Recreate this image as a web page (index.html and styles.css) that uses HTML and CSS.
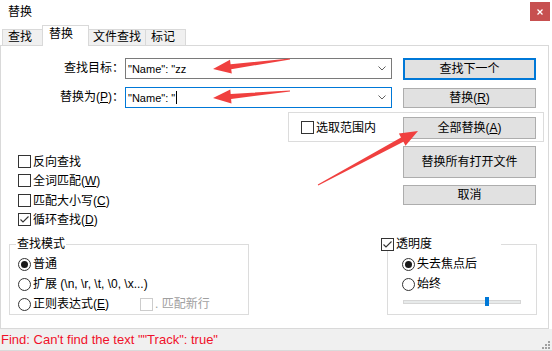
FILE: index.html
```html
<!DOCTYPE html>
<html lang="zh-CN">
<head>
<meta charset="utf-8">
<title>替换</title>
<link rel="stylesheet" href="styles.css">
</head>
<body>
<div class="window">
  <div class="titlebar">
    <span class="title">替换</span>
    <span class="close"><svg width="6" height="6" viewBox="0 0 6 6"><path d="M0.5 0.5L5.5 5.5M5.5 0.5L0.5 5.5" stroke="#fff" stroke-width="1.3"/></svg></span>
  </div>
  <div class="tabs">
    <div class="tab t1">查找</div>
    <div class="tab t2 active">替换</div>
    <div class="tab t3">文件查找</div>
    <div class="tab t4">标记</div>
  </div>
  <div class="panel">
    <div class="row r1">
      <span class="lbl">查找目标：</span>
      <div class="combo"><span class="val">"Name": "zz</span><svg class="chev" width="8" height="5" viewBox="0 0 8 5"><path d="M0.5 0.5L4 4L7.5 0.5" fill="none" stroke="#606060"/></svg></div>
      <button class="btn default b1">查找下一个</button>
    </div>
    <div class="row r2">
      <span class="lbl">替换为(<u>P</u>)：</span>
      <div class="combo focus"><span class="val">"Name": "<i class="caret"></i></span><svg class="chev" width="8" height="5" viewBox="0 0 8 5"><path d="M0.5 0.5L4 4L7.5 0.5" fill="none" stroke="#606060"/></svg></div>
      <button class="btn b2">替换(<u>R</u>)</button>
    </div>
    <div class="selgroup">
      <label class="chk selchk"><span class="box"></span>选取范围内</label>
      <button class="btn b3">全部替换(<u>A</u>)</button>
    </div>
    <div class="mid">
      <div class="options">
        <label class="chk"><span class="box"></span>反向查找</label>
        <label class="chk"><span class="box"></span>全词匹配(<u>W</u>)</label>
        <label class="chk"><span class="box"></span>匹配大小写(<u>C</u>)</label>
        <label class="chk"><span class="box checked"><svg width="11" height="11" viewBox="0 0 11 11"><path d="M1.5 5.5L4 8L9.5 2.5" fill="none" stroke="#333" stroke-width="1.1"/></svg></span>循环查找(<u>D</u>)</label>
      </div>
      <div class="sidebtns">
        <button class="btn b4">替换所有打开文件</button>
        <button class="btn b5">取消</button>
      </div>
    </div>
    <div class="bottom">
      <fieldset class="group mode">
        <legend>查找模式</legend>
        <label class="radio"><span class="dot on"></span>普通</label>
        <label class="radio"><span class="dot"></span>扩展 (\n, \r, \t, \0, \x...)</label>
        <div class="regexrow">
          <label class="radio"><span class="dot"></span>正则表达式(<u>E</u>)</label>
          <label class="chk disabled"><span class="box"></span>. 匹配新行</label>
        </div>
      </fieldset>
      <fieldset class="group trans">
        <legend><label class="chk"><span class="box checked"><svg width="11" height="11" viewBox="0 0 11 11"><path d="M1.5 5.5L4 8L9.5 2.5" fill="none" stroke="#333" stroke-width="1.1"/></svg></span>透明度</label></legend>
        <label class="radio"><span class="dot on"></span>失去焦点后</label>
        <label class="radio"><span class="dot"></span>始终</label>
        <div class="slider"><span class="thumb"></span></div>
      </fieldset>
    </div>
  </div>
  <div class="status">
    <span class="msg">Find: Can't find the text ""Track": true"</span>
    <svg class="grip" width="8" height="8" viewBox="0 0 8 8"><g fill="#a0a0a0"><rect x="6" y="0" width="2" height="2"/><rect x="3" y="3" width="2" height="2"/><rect x="6" y="3" width="2" height="2"/><rect x="0" y="6" width="2" height="2"/><rect x="3" y="6" width="2" height="2"/><rect x="6" y="6" width="2" height="2"/></g></svg>
  </div>
</div>
<svg class="arrows" width="552" height="351" viewBox="0 0 552 351">
  <g fill="#f0403f">
    <polygon points="289.9,58.5 230.6,64.2 230,59.8 213,69 231.8,73.6 231.2,69.2 290.1,59.5"/>
    <polygon points="290,90.5 230.7,93.9 230.3,89.4 213,98 231.5,103.4 231.1,98.9 290,91.5"/>
    <polygon points="318.2,185.4 403.4,141.8 405.5,145.8 418,131 398.9,133.4 401,137.4 317.8,184.6"/>
  </g>
</svg>
</body>
</html>
```

FILE: styles.css
```css
* { box-sizing: border-box; margin: 0; padding: 0; }
html, body { width: 552px; height: 351px; overflow: hidden; }
body {
  background: #fff;
  font-family: "Liberation Sans", "Noto Sans CJK SC", sans-serif;
  font-size: 12px;
  line-height: 14px;
  color: #000;
  position: relative;
}
u { text-decoration: underline; text-underline-offset: 1px; }

.titlebar { height: 25px; display: flex; justify-content: space-between; align-items: flex-start; }
.title { padding: 5px 0 0 8px; }
.close {
  width: 20px; height: 19px; margin: 2px 2px 0 0;
  background: #c75050;
  display: flex; align-items: center; justify-content: center;
}

.tabs { height: 20px; display: flex; align-items: flex-end; padding-left: 2px; }
.tab {
  height: 16px;
  border: 1px solid #d9d9d9; border-bottom: none;
  background: #f0f0f0;
  line-height: 15px;
  padding-left: 5px;
  margin-left: -1px;
}
.t1 { width: 41px; margin-left: 0; }
.t2 { width: 47px; }
.t3 { width: 58px; padding-left: 4px; }
.t4 { width: 41px; padding-left: 5px; }
.tab.active {
  height: 21px; margin-bottom: -1px;
  background: #fff;
  position: relative; z-index: 1;
  padding-left: 6px; line-height: 17px;
}

.panel {
  width: 549px; height: 284px;
  border: 1px solid #d9d9d9;
}

.row { display: flex; align-items: flex-start; }
.r1 { margin-top: 12px; }
.r2 { margin-top: 7px; }
.lbl { width: 123px; text-align: right; padding-right: 0; line-height: 21px; }
.combo {
  width: 267px; height: 21px; margin-left: 1px;
  border: 1px solid #7a7a7a;
  display: flex; align-items: center; justify-content: space-between;
  padding: 0 3px 0 2px;
}
.combo.focus { border-color: #0078d7; }
.val { display: flex; align-items: center; white-space: pre; font-size: 11px; }
.caret { display: inline-block; width: 1px; height: 13px; background: #000; margin-left: 1px; }
.chev { margin-right: 2px; }

.btn {
  width: 133px;
  background: #e1e1e1;
  border: 1px solid #adadad;
  font: inherit; color: #000;
  display: flex; align-items: center; justify-content: center;
}
.btn.default { border: 2px solid #0078d7; }
.b1 { height: 22px; margin-left: 11px; }
.b2 { height: 20px; margin-left: 11px; margin-top: 1px; }
.b3 { height: 22px; margin-top: 4px; }
.b4 { height: 32px; margin-top: 4px; }
.b5 { height: 20px; margin-top: 7px; }

.selgroup {
  margin: 4px 0 0 287px;
  width: 256px; height: 30px;
  border: 1px solid #dcdcdc;
  display: flex; align-items: flex-start;
}

.chk { display: flex; align-items: center; white-space: nowrap; }
.box {
  width: 13px; height: 13px; flex: none;
  border: 1px solid #333; background: #fff;
  margin-right: 2px;
  display: flex; align-items: center; justify-content: center;
}
.selchk { width: 102px; margin: 8px 0 0 12px; height: 13px; }

.mid { height: 95px; display: flex; align-items: flex-start; }
.options { width: 402px; padding: 13px 0 0 17px; }
.options .chk { height: 19.33px; align-items: flex-start; }
.sidebtns { display: flex; flex-direction: column; }

.bottom { display: flex; align-items: flex-start; }
.group {
  border: 1px solid #dcdcdc;
  height: 78px;
}
.group legend { line-height: 14px; height: 14px; }
.mode { width: 240px; margin-left: 8px; }
.mode legend { margin-left: 6px; padding: 0 1px; }
.trans { width: 150px; margin-left: 138px; }
.trans legend { width: 120px; margin-left: -7px; }

.radio { display: flex; align-items: center; height: 20px; white-space: nowrap; }
.mode .radio { margin-left: 8px; }
.mode > .radio:first-of-type { margin-top: 3px; }
.dot {
  width: 13px; height: 13px; flex: none;
  border: 1px solid #333; border-radius: 50%;
  background: #fff; margin-right: 2px;
  display: flex; align-items: center; justify-content: center;
}
.dot.on::after { content: ""; width: 7px; height: 7px; border-radius: 50%; background: #1a1a1a; }
.regexrow { display: flex; align-items: center; }
.regexrow .radio { width: 122px; }
.chk.disabled { color: #a0a0a0; }
.chk.disabled .box { border-color: #ccc; }

.trans .radio { margin-left: 14px; }
.trans > .radio:first-of-type { margin-top: 3px; }
.slider {
  position: relative;
  width: 118px; height: 4px;
  margin: 6px 0 0 15px;
  background: #e7eaea; border: 1px solid #d6d6d6;
}
.thumb {
  position: absolute; left: 81px; top: -4px;
  width: 4px; height: 9px; background: #0078d7;
}

.status {
  height: 22px;
  background: #f0f0f0;
  border-bottom: 1px solid #dadada;
  display: flex; justify-content: space-between; align-items: center;
}
.msg { color: #f0102a; padding-left: 1px; font-size: 13px; }
.grip { align-self: flex-end; margin: 0 2px 1px 0; }

.arrows { position: absolute; left: 0; top: 0; pointer-events: none; }
```
